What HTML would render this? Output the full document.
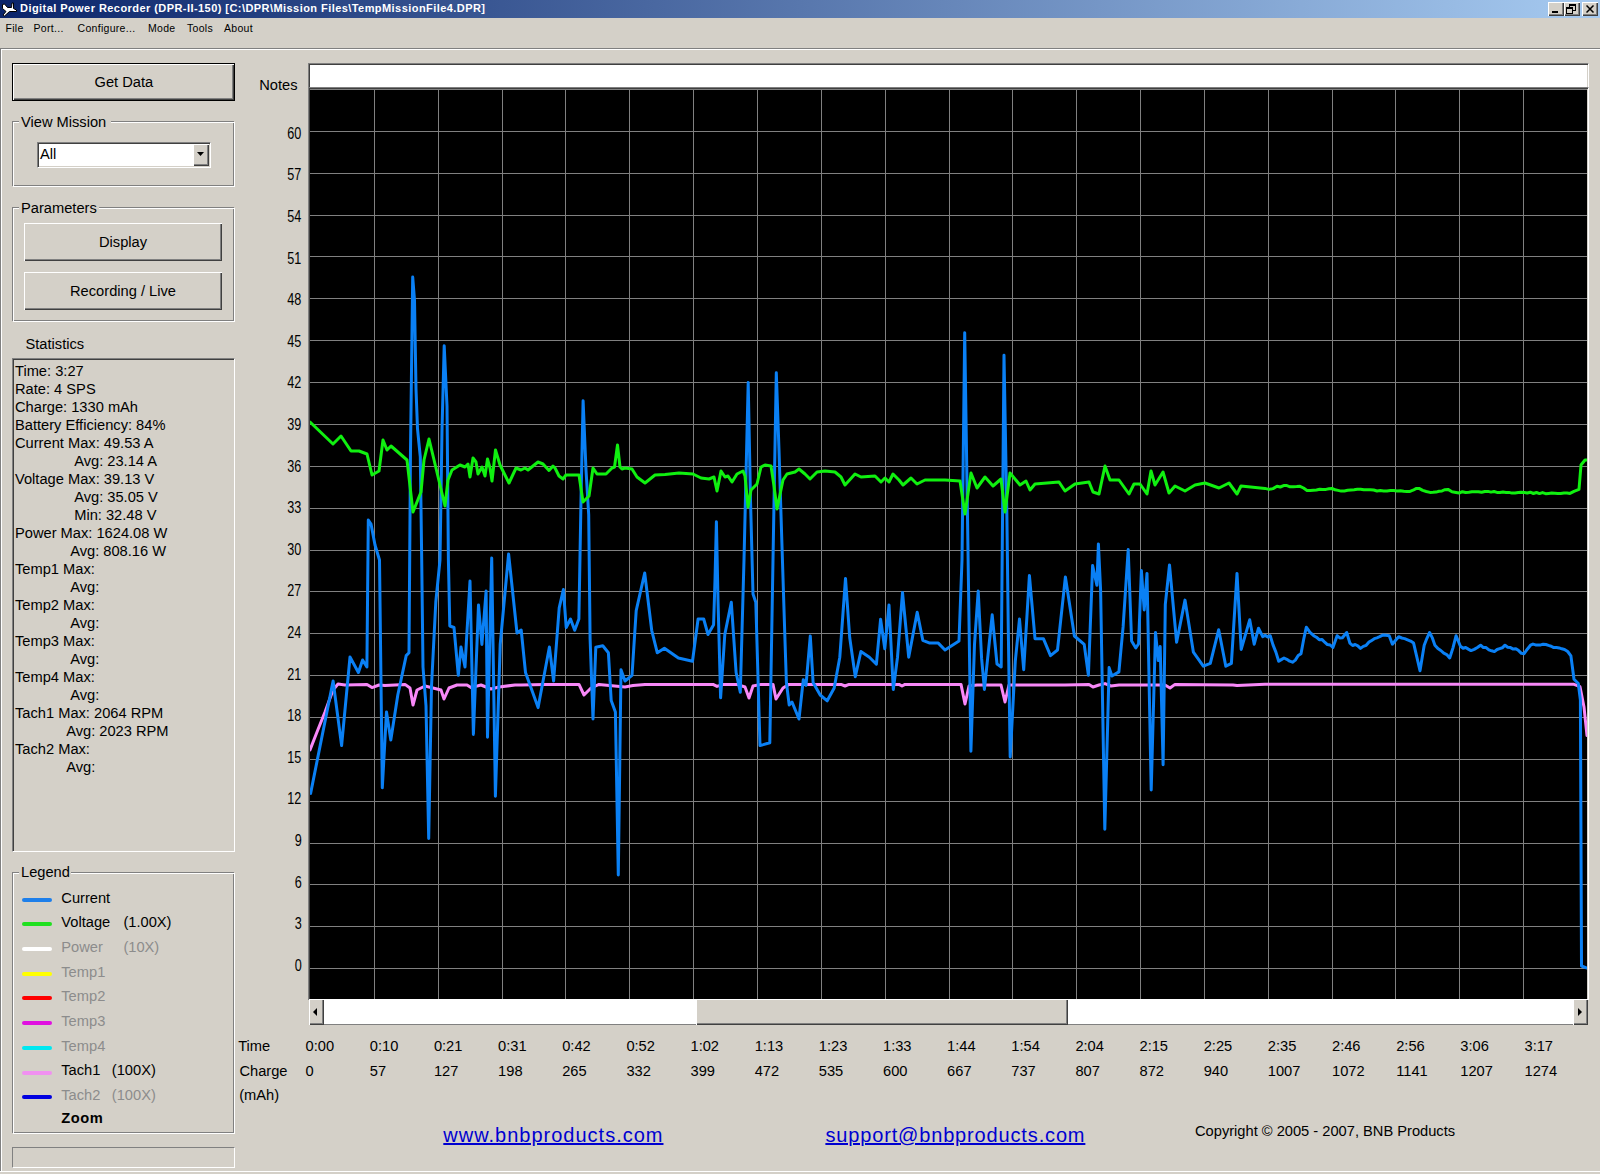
<!DOCTYPE html>
<html><head><meta charset="utf-8"><style>
html,body{margin:0;padding:0;}
body{width:1600px;height:1174px;position:relative;overflow:hidden;background:#D4D0C8;font-family:"Liberation Sans",sans-serif;color:#000;}
.t{position:absolute;white-space:nowrap;line-height:1;}
.tb{position:absolute;top:2px;width:16px;height:14px;background:#D4D0C8;box-sizing:border-box;box-shadow:inset 1px 1px #fff, inset -1px -1px #404040, inset -2px -2px #808080;}
</style></head><body>
<div style="position:absolute;left:0px;top:0px;width:1600px;height:18px;background:linear-gradient(to right,#0A246A,#A6CAF0);"></div>
<svg style="position:absolute;left:1px;top:1px" width="17" height="16" viewBox="0 0 17 16">
<path d="M1.5 3.5 L3.5 3 L6.5 6.5 L10.5 6.5 L11 2 L12.5 2 L12.5 7.5 L15.5 9 L15.5 10.5 L8.5 10.5 L3.5 15 L2 14 L5 10.5 L1.5 7.5 Z" fill="#fff" stroke="#000" stroke-width="1"/></svg>
<div class="t " style="left:20.0px;top:3.19px;font-size:11px;color:#fff;font-weight:bold;letter-spacing:0.44px;">Digital Power Recorder (DPR-II-150) [C:\DPR\Mission Files\TempMissionFile4.DPR]</div>
<div class="tb" style="left:1548px;"><div style="position:absolute;left:4px;top:9px;width:6px;height:2px;background:#000"></div></div>
<div class="tb" style="left:1564px;"><div style="position:absolute;left:5px;top:2px;width:5px;height:4px;border:1px solid #000;border-top-width:2px"></div><div style="position:absolute;left:2px;top:5px;width:5px;height:4px;border:1px solid #000;border-top-width:2px;background:#D4D0C8"></div></div>
<div class="tb" style="left:1582px;"><svg style="position:absolute;left:4px;top:3px" width="9" height="8"><path d="M0.5 0.5 L7.5 7.5 M7.5 0.5 L0.5 7.5" stroke="#000" stroke-width="1.5"/></svg></div>
<div class="t " style="left:5.5px;top:22.71px;font-size:10.5px;letter-spacing:0.3px;">File</div>
<div class="t " style="left:33.5px;top:22.71px;font-size:10.5px;letter-spacing:0.3px;">Port...</div>
<div class="t " style="left:77.5px;top:22.71px;font-size:10.5px;letter-spacing:0.3px;">Configure...</div>
<div class="t " style="left:148.0px;top:22.71px;font-size:10.5px;letter-spacing:0.3px;">Mode</div>
<div class="t " style="left:187.0px;top:22.71px;font-size:10.5px;letter-spacing:0.3px;">Tools</div>
<div class="t " style="left:224.0px;top:22.71px;font-size:10.5px;letter-spacing:0.3px;">About</div>
<div style="position:absolute;left:0px;top:48px;width:1600px;height:1px;background:#808080"></div>
<div style="position:absolute;left:0px;top:49px;width:1600px;height:1px;background:#fff"></div>
<div style="position:absolute;left:0px;top:48px;width:1px;height:1124px;background:#808080"></div>
<div style="position:absolute;left:1px;top:49px;width:1px;height:1122px;background:#fff"></div>
<div style="position:absolute;left:0px;top:1171px;width:1600px;height:1px;background:#fff"></div>
<div style="position:absolute;left:12px;top:63px;width:223px;height:38px;background:#D4D0C8;box-sizing:border-box;border:1px solid #000;box-shadow:inset 1px 1px #fff, inset -1px -1px #404040, inset -2px -2px #808080;"></div>
<div class="t " style="left:94.5px;top:74.58px;font-size:14.67px;">Get Data</div>
<div style="position:absolute;left:12px;top:121px;width:222px;height:65px;box-sizing:border-box;border:1px solid #808080;"></div><div style="position:absolute;left:13px;top:122px;width:222px;height:65px;box-sizing:border-box;border:1px solid #fff;"></div><div style="position:absolute;left:12px;top:121px;width:222px;height:65px;box-sizing:border-box;border-left:1px solid #808080;border-top:1px solid #808080;"></div>
<div style="position:absolute;left:19px;top:112px;width:92px;height:16px;background:#D4D0C8"></div>
<div class="t " style="left:21.0px;top:115.08px;font-size:14.67px;">View Mission</div>
<div style="position:absolute;left:37px;top:142px;width:174px;height:26px;box-sizing:border-box;background:#fff;border-left:1px solid #808080;border-top:1px solid #808080;border-right:1px solid #fff;border-bottom:1px solid #fff;box-shadow:inset 1px 1px #404040, inset -1px -1px #D4D0C8;"></div>
<div style="position:absolute;left:193px;top:144px;width:16px;height:22px;background:#D4D0C8;box-sizing:border-box;box-shadow:inset 1px 1px #fff, inset -1px -1px #404040, inset -2px -2px #808080;"></div>
<svg style="position:absolute;left:197px;top:152px" width="8" height="5"><path d="M0 0 H7 L3.5 4 Z" fill="#000"/></svg>
<div class="t " style="left:40.0px;top:147.28px;font-size:14.67px;">All</div>
<div style="position:absolute;left:12px;top:207px;width:222px;height:114px;box-sizing:border-box;border:1px solid #808080;"></div><div style="position:absolute;left:13px;top:208px;width:222px;height:114px;box-sizing:border-box;border:1px solid #fff;"></div><div style="position:absolute;left:12px;top:207px;width:222px;height:114px;box-sizing:border-box;border-left:1px solid #808080;border-top:1px solid #808080;"></div>
<div style="position:absolute;left:19px;top:198px;width:80px;height:16px;background:#D4D0C8"></div>
<div class="t " style="left:21.0px;top:200.58px;font-size:14.67px;">Parameters</div>
<div style="position:absolute;left:24px;top:223px;width:198px;height:38px;background:#D4D0C8;box-sizing:border-box;box-shadow:inset 1px 1px #fff, inset -1px -1px #404040, inset -2px -2px #808080;"></div>
<div class="t " style="left:0.0px;top:234.58px;font-size:14.67px;width:246px;text-align:center;">Display</div>
<div style="position:absolute;left:24px;top:272px;width:198px;height:38px;background:#D4D0C8;box-sizing:border-box;box-shadow:inset 1px 1px #fff, inset -1px -1px #404040, inset -2px -2px #808080;"></div>
<div class="t " style="left:0.0px;top:283.58px;font-size:14.67px;width:246px;text-align:center;">Recording / Live</div>
<div class="t " style="left:25.5px;top:336.88px;font-size:14.67px;">Statistics</div>
<div style="position:absolute;left:12px;top:358px;width:223px;height:494px;box-sizing:border-box;border-left:1px solid #808080;border-top:1px solid #808080;border-right:1px solid #fff;border-bottom:1px solid #fff;box-shadow:inset 1px 1px #404040;"></div>
<div class="t " style="left:15.0px;top:364.18px;font-size:14.67px;">Time: 3:27</div>
<div class="t " style="left:15.0px;top:382.18px;font-size:14.67px;">Rate: 4 SPS</div>
<div class="t " style="left:15.0px;top:400.18px;font-size:14.67px;">Charge: 1330 mAh</div>
<div class="t " style="left:15.0px;top:418.18px;font-size:14.67px;">Battery Efficiency: 84%</div>
<div class="t " style="left:15.0px;top:436.18px;font-size:14.67px;">Current Max: 49.53 A</div>
<div class="t " style="left:74.2px;top:454.18px;font-size:14.67px;">Avg: 23.14 A</div>
<div class="t " style="left:15.0px;top:472.18px;font-size:14.67px;">Voltage Max: 39.13 V</div>
<div class="t " style="left:74.2px;top:490.18px;font-size:14.67px;">Avg: 35.05 V</div>
<div class="t " style="left:74.2px;top:508.18px;font-size:14.67px;">Min: 32.48 V</div>
<div class="t " style="left:15.0px;top:526.18px;font-size:14.67px;">Power Max: 1624.08 W</div>
<div class="t " style="left:70.2px;top:544.18px;font-size:14.67px;">Avg: 808.16 W</div>
<div class="t " style="left:15.0px;top:562.18px;font-size:14.67px;">Temp1 Max:</div>
<div class="t " style="left:70.2px;top:580.18px;font-size:14.67px;">Avg:</div>
<div class="t " style="left:15.0px;top:598.18px;font-size:14.67px;">Temp2 Max:</div>
<div class="t " style="left:70.2px;top:616.18px;font-size:14.67px;">Avg:</div>
<div class="t " style="left:15.0px;top:634.18px;font-size:14.67px;">Temp3 Max:</div>
<div class="t " style="left:70.2px;top:652.18px;font-size:14.67px;">Avg:</div>
<div class="t " style="left:15.0px;top:670.18px;font-size:14.67px;">Temp4 Max:</div>
<div class="t " style="left:70.2px;top:688.18px;font-size:14.67px;">Avg:</div>
<div class="t " style="left:15.0px;top:706.18px;font-size:14.67px;">Tach1 Max: 2064 RPM</div>
<div class="t " style="left:66.2px;top:724.18px;font-size:14.67px;">Avg: 2023 RPM</div>
<div class="t " style="left:15.0px;top:742.18px;font-size:14.67px;">Tach2 Max:</div>
<div class="t " style="left:66.2px;top:760.18px;font-size:14.67px;">Avg:</div>
<div style="position:absolute;left:12px;top:872px;width:222px;height:261px;box-sizing:border-box;border:1px solid #808080;"></div><div style="position:absolute;left:13px;top:873px;width:222px;height:261px;box-sizing:border-box;border:1px solid #fff;"></div><div style="position:absolute;left:12px;top:872px;width:222px;height:261px;box-sizing:border-box;border-left:1px solid #808080;border-top:1px solid #808080;"></div>
<div style="position:absolute;left:19px;top:863px;width:52px;height:16px;background:#D4D0C8"></div>
<div class="t " style="left:21.0px;top:865.18px;font-size:14.67px;">Legend</div>
<div style="position:absolute;left:22px;top:898px;width:30px;height:4px;background:#1E7FEA;border-radius:2px;"></div>
<div class="t " style="left:61.3px;top:890.58px;font-size:14.67px;color:#000;">Current</div>
<div style="position:absolute;left:22px;top:922px;width:30px;height:4px;background:#20E020;border-radius:2px;"></div>
<div class="t " style="left:61.3px;top:915.28px;font-size:14.67px;color:#000;">Voltage</div>
<div class="t " style="left:123.4px;top:915.28px;font-size:14.67px;color:#000;">(1.00X)</div>
<div style="position:absolute;left:22px;top:947px;width:30px;height:4px;background:#FFFFFF;border-radius:2px;"></div>
<div class="t " style="left:61.3px;top:939.98px;font-size:14.67px;color:#8C8C8C;">Power</div>
<div class="t " style="left:123.4px;top:939.98px;font-size:14.67px;color:#8C8C8C;">(10X)</div>
<div style="position:absolute;left:22px;top:972px;width:30px;height:4px;background:#FFFF00;border-radius:2px;"></div>
<div class="t " style="left:61.3px;top:964.68px;font-size:14.67px;color:#8C8C8C;">Temp1</div>
<div style="position:absolute;left:22px;top:996px;width:30px;height:4px;background:#FF0000;border-radius:2px;"></div>
<div class="t " style="left:61.3px;top:989.38px;font-size:14.67px;color:#8C8C8C;">Temp2</div>
<div style="position:absolute;left:22px;top:1021px;width:30px;height:4px;background:#E010E0;border-radius:2px;"></div>
<div class="t " style="left:61.3px;top:1014.08px;font-size:14.67px;color:#8C8C8C;">Temp3</div>
<div style="position:absolute;left:22px;top:1046px;width:30px;height:4px;background:#00E8F0;border-radius:2px;"></div>
<div class="t " style="left:61.3px;top:1038.78px;font-size:14.67px;color:#8C8C8C;">Temp4</div>
<div style="position:absolute;left:22px;top:1071px;width:30px;height:4px;background:#F090F0;border-radius:2px;"></div>
<div class="t " style="left:61.3px;top:1063.48px;font-size:14.67px;color:#000;">Tach1</div>
<div class="t " style="left:111.8px;top:1063.48px;font-size:14.67px;color:#000;">(100X)</div>
<div style="position:absolute;left:22px;top:1095px;width:30px;height:4px;background:#0000E0;border-radius:2px;"></div>
<div class="t " style="left:61.3px;top:1088.18px;font-size:14.67px;color:#8C8C8C;">Tach2</div>
<div class="t " style="left:111.8px;top:1088.18px;font-size:14.67px;color:#8C8C8C;">(100X)</div>
<div class="t " style="left:61.3px;top:1110.58px;font-size:14.67px;font-weight:bold;letter-spacing:0.5px;">Zoom</div>
<div style="position:absolute;left:12px;top:1147px;width:223px;height:21px;box-sizing:border-box;border-left:1px solid #808080;border-top:1px solid #808080;border-right:1px solid #fff;border-bottom:1px solid #fff;"></div>
<div class="t " style="left:259.2px;top:77.78px;font-size:14.67px;">Notes</div>
<div style="position:absolute;left:308px;top:63px;width:1281px;height:26px;background:#fff;box-sizing:border-box;border-left:1px solid #808080;border-top:1px solid #808080;border-right:1px solid #fff;border-bottom:1px solid #D4D0C8;box-shadow:inset 1px 1px #404040, inset -1px -1px #D4D0C8;"></div>
<div style="position:absolute;left:308px;top:87px;width:1281px;height:913px;background:#000;box-sizing:border-box;border-left:1px solid #808080;border-top:1px solid #808080;border-right:1px solid #fff;box-shadow:inset 1px 1px #404040, inset -1px 0 #D4D0C8;"></div>
<svg style="position:absolute;left:0;top:0" width="1600" height="1174" viewBox="0 0 1600 1174"><g stroke="#808080" stroke-width="1" shape-rendering="crispEdges"><line x1="374.5" y1="89" x2="374.5" y2="999"/><line x1="438.5" y1="89" x2="438.5" y2="999"/><line x1="502.5" y1="89" x2="502.5" y2="999"/><line x1="565.5" y1="89" x2="565.5" y2="999"/><line x1="629.5" y1="89" x2="629.5" y2="999"/><line x1="693.5" y1="89" x2="693.5" y2="999"/><line x1="757.5" y1="89" x2="757.5" y2="999"/><line x1="821.5" y1="89" x2="821.5" y2="999"/><line x1="885.5" y1="89" x2="885.5" y2="999"/><line x1="949.5" y1="89" x2="949.5" y2="999"/><line x1="1012.5" y1="89" x2="1012.5" y2="999"/><line x1="1076.5" y1="89" x2="1076.5" y2="999"/><line x1="1140.5" y1="89" x2="1140.5" y2="999"/><line x1="1204.5" y1="89" x2="1204.5" y2="999"/><line x1="1268.5" y1="89" x2="1268.5" y2="999"/><line x1="1332.5" y1="89" x2="1332.5" y2="999"/><line x1="1395.5" y1="89" x2="1395.5" y2="999"/><line x1="1459.5" y1="89" x2="1459.5" y2="999"/><line x1="1523.5" y1="89" x2="1523.5" y2="999"/><line x1="310" y1="89.5" x2="1587" y2="89.5"/><line x1="310" y1="131.5" x2="1587" y2="131.5"/><line x1="310" y1="173.5" x2="1587" y2="173.5"/><line x1="310" y1="215.5" x2="1587" y2="215.5"/><line x1="310" y1="256.5" x2="1587" y2="256.5"/><line x1="310" y1="298.5" x2="1587" y2="298.5"/><line x1="310" y1="340.5" x2="1587" y2="340.5"/><line x1="310" y1="382.5" x2="1587" y2="382.5"/><line x1="310" y1="424.5" x2="1587" y2="424.5"/><line x1="310" y1="466.5" x2="1587" y2="466.5"/><line x1="310" y1="508.5" x2="1587" y2="508.5"/><line x1="310" y1="550.5" x2="1587" y2="550.5"/><line x1="310" y1="591.5" x2="1587" y2="591.5"/><line x1="310" y1="633.5" x2="1587" y2="633.5"/><line x1="310" y1="675.5" x2="1587" y2="675.5"/><line x1="310" y1="717.5" x2="1587" y2="717.5"/><line x1="310" y1="759.5" x2="1587" y2="759.5"/><line x1="310" y1="801.5" x2="1587" y2="801.5"/><line x1="310" y1="843.5" x2="1587" y2="843.5"/><line x1="310" y1="884.5" x2="1587" y2="884.5"/><line x1="310" y1="926.5" x2="1587" y2="926.5"/><line x1="310" y1="968.5" x2="1587" y2="968.5"/></g><g clip-path="url(#clip)"><clipPath id="clip"><rect x="310" y="89" width="1277" height="910"/></clipPath><polyline fill="none" stroke="#F888F8" stroke-width="3" stroke-linejoin="round" stroke-linecap="round" points="310.0,750.0 317.0,732.0 325.0,712.0 333.0,690.0 338.0,684.0 345.0,685.0 367.0,684.4 372.0,687.6 379.0,685.0 385.0,685.6 405.0,684.4 410.0,688.0 413.0,705.0 417.0,690.0 425.0,686.0 433.0,688.0 441.0,690.0 444.0,699.0 449.0,688.0 457.0,685.0 467.0,685.0 471.0,687.6 481.0,685.0 491.0,689.0 499.0,687.0 515.0,685.0 521.0,685.0 545.0,684.4 579.0,684.4 584.0,695.0 591.0,688.0 599.0,684.4 625.0,687.0 633.0,685.6 645.0,684.4 713.0,684.4 717.0,686.4 723.0,684.4 737.0,684.4 745.0,687.0 749.0,698.0 753.0,686.0 761.0,684.4 773.0,684.4 776.0,699.0 783.0,688.0 789.0,684.4 841.0,684.4 845.0,686.0 849.0,684.4 899.0,684.4 902.0,686.0 905.0,684.4 945.0,684.4 961.0,684.4 965.0,704.0 969.0,686.0 977.0,685.0 1001.0,685.0 1005.0,702.0 1009.0,685.0 1025.0,685.0 1065.0,685.0 1089.0,684.4 1093.0,687.0 1099.0,685.0 1105.0,683.6 1111.0,686.0 1119.0,685.0 1165.0,685.0 1170.0,688.0 1175.0,684.4 1233.0,685.0 1237.0,685.6 1265.0,684.3 1574.0,684.3 1580.0,686.7 1584.0,707.0 1587.0,735.5"/><polyline fill="none" stroke="#0A80F5" stroke-width="3" stroke-linejoin="round" stroke-linecap="round" points="310.6,793.4 333.1,681.0 341.6,745.6 350.0,657.0 358.4,672.5 362.6,660.0 366.9,667.0 368.3,520.0 371.0,524.0 375.0,545.0 379.5,560.0 382.3,787.8 386.5,711.9 390.8,740.0 397.8,695.0 406.2,655.6 409.0,652.8 410.5,450.0 412.7,277.0 414.5,300.0 416.0,389.0 417.5,428.7 418.9,442.8 420.3,456.9 421.7,560.0 423.0,667.0 426.0,706.0 428.7,838.4 431.5,686.5 435.8,602.0 440.0,560.0 442.0,430.0 444.2,345.8 447.0,406.0 448.4,560.0 449.8,626.0 454.0,627.5 458.3,675.3 461.0,647.0 465.0,667.0 466.4,641.6 470.0,581.0 473.4,734.4 478.5,605.0 481.9,644.4 486.1,591.0 487.5,737.2 491.7,558.0 495.4,796.2 500.2,644.4 508.6,554.0 517.0,633.0 521.2,630.0 525.5,672.5 538.1,707.6 549.4,647.0 553.6,681.0 559.2,607.8 563.4,589.5 566.2,627.5 570.5,619.0 574.7,630.3 578.9,619.0 581.0,500.0 583.1,400.8 586.0,470.0 588.7,514.7 590.1,638.7 593.0,719.0 595.8,647.2 602.8,645.8 608.4,652.8 611.2,700.6 615.4,711.9 618.3,875.0 621.0,669.7 625.0,681.0 632.0,675.3 636.2,610.6 644.7,573.0 651.7,630.3 657.3,652.8 664.4,648.2 678.4,658.0 692.5,661.2 698.1,619.0 703.7,619.0 708.0,634.5 713.6,624.7 715.0,580.0 716.4,521.7 718.0,600.0 720.6,697.8 724.8,634.5 731.3,602.2 736.1,672.5 740.3,692.2 744.0,560.0 748.2,382.5 750.5,500.0 753.0,594.0 755.8,602.2 760.0,745.6 769.8,742.8 773.0,560.0 776.3,372.7 779.0,450.0 781.0,514.7 785.0,641.0 786.4,682.5 789.2,705.0 792.0,702.0 799.0,719.0 803.3,679.7 806.0,685.3 810.3,636.0 813.1,682.5 820.2,695.0 827.2,700.8 834.2,688.0 839.8,657.2 845.5,578.4 849.7,637.5 855.3,676.8 860.9,651.5 869.4,657.2 876.4,664.2 880.6,619.2 884.8,648.7 889.0,605.0 893.3,689.5 897.5,657.2 902.5,592.5 908.7,657.2 917.2,612.2 922.8,640.3 929.8,643.1 938.3,643.1 945.0,650.0 959.0,641.0 962.0,560.0 964.7,332.7 967.5,516.8 970.9,751.2 974.5,644.4 978.2,591.0 981.6,658.4 984.4,689.4 992.2,614.8 997.0,664.0 1001.2,666.9 1004.0,355.2 1006.9,516.8 1008.3,630.3 1010.2,756.9 1015.3,661.2 1019.5,619.0 1023.7,669.7 1029.4,575.5 1035.0,638.7 1043.4,638.7 1050.5,655.6 1057.5,650.0 1065.4,576.9 1074.4,636.0 1084.2,644.4 1088.4,675.3 1092.6,565.6 1096.9,585.3 1098.4,543.9 1100.6,590.3 1104.8,829.3 1107.7,722.5 1109.1,667.6 1111.9,676.0 1118.9,671.9 1123.1,626.9 1128.2,549.5 1131.6,641.0 1135.8,648.0 1138.6,643.7 1141.4,570.6 1144.2,610.0 1147.0,573.4 1151.2,790.0 1155.5,632.5 1158.3,660.6 1160.2,646.5 1163.1,764.7 1165.3,604.4 1169.5,565.0 1176.6,642.3 1185.0,600.1 1193.4,652.2 1203.3,666.2 1210.3,663.4 1218.7,629.7 1225.8,666.2 1231.4,663.4 1237.0,573.4 1241.2,649.4 1249.7,619.8 1254.2,644.2 1258.5,628.2 1262.7,636.7 1265.2,635.4 1267.7,636.9 1270.2,635.7 1273.0,644.9 1275.9,652.1 1278.7,661.2 1281.3,659.6 1284.0,658.0 1286.8,659.3 1289.7,661.2 1292.5,662.2 1295.3,660.1 1298.2,655.5 1301.0,653.7 1303.7,639.2 1306.3,627.2 1310.0,632.3 1313.7,635.7 1316.4,637.2 1319.2,639.7 1321.9,639.4 1324.7,642.2 1327.4,644.6 1330.2,645.0 1332.9,647.4 1337.1,635.7 1339.8,637.9 1342.4,637.8 1346.7,632.5 1349.9,643.1 1352.6,645.5 1355.2,644.5 1357.8,645.8 1360.5,648.4 1363.3,646.4 1366.2,645.3 1369.0,642.1 1371.7,640.4 1374.3,638.7 1376.9,637.8 1379.6,636.7 1382.8,635.1 1386.0,635.3 1389.2,635.7 1392.4,644.2 1395.6,640.3 1398.7,636.7 1401.7,638.0 1404.7,638.6 1407.6,639.8 1410.6,641.1 1413.6,643.1 1416.8,656.8 1420.0,670.7 1424.2,645.2 1426.9,638.3 1429.6,632.5 1432.2,637.6 1434.9,645.2 1437.9,648.6 1440.8,650.5 1443.8,653.2 1446.7,654.6 1449.7,658.0 1452.9,648.1 1456.1,635.7 1460.4,646.3 1463.1,648.3 1465.7,647.5 1468.3,649.1 1471.0,650.6 1474.2,649.4 1477.4,647.5 1480.6,645.2 1483.4,647.6 1486.1,647.6 1488.9,649.9 1491.6,650.8 1494.4,651.6 1497.1,649.5 1499.7,648.6 1502.3,647.8 1505.0,645.2 1507.7,647.3 1510.5,647.6 1513.2,649.1 1515.9,648.8 1518.6,650.6 1521.4,653.3 1524.1,653.7 1527.3,649.2 1530.5,645.2 1533.0,644.1 1535.6,644.9 1538.1,645.1 1540.7,644.9 1543.2,644.2 1545.9,644.5 1548.5,645.4 1551.2,646.2 1553.8,647.6 1556.5,647.6 1559.2,647.9 1561.8,648.8 1564.5,649.5 1567.7,651.5 1570.9,655.9 1574.0,679.2 1578.3,683.5 1580.4,700.0 1581.5,966.0 1587.0,968.0"/><polyline fill="none" stroke="#10F010" stroke-width="3" stroke-linejoin="round" stroke-linecap="round" points="310.0,422.0 333.0,444.0 341.0,436.0 351.0,451.0 359.0,451.0 367.0,454.0 372.0,475.0 379.0,471.0 383.0,440.0 387.0,450.0 391.0,446.0 407.0,460.0 413.0,512.0 421.0,492.0 424.0,460.0 429.0,439.0 435.0,464.0 445.0,506.0 448.0,480.0 452.0,470.0 460.0,465.0 465.0,467.0 468.0,464.0 470.0,477.0 473.0,458.0 476.0,462.0 478.0,474.0 482.0,467.0 485.0,476.0 487.5,459.0 490.0,468.0 492.0,481.0 495.5,450.0 500.0,465.0 509.0,483.0 516.0,468.0 521.0,470.0 525.0,468.0 528.0,470.0 538.0,462.0 543.0,464.0 549.0,470.5 553.0,466.0 555.0,468.0 559.0,476.0 563.0,479.0 566.0,475.0 579.0,475.0 583.0,502.0 589.0,496.0 593.0,468.0 597.0,474.0 606.0,474.0 612.0,468.0 614.5,467.0 617.5,445.0 620.0,467.0 622.0,469.0 625.0,468.0 632.0,469.0 637.0,477.0 645.0,483.0 655.0,475.0 665.0,474.4 679.0,473.0 693.0,474.0 701.0,478.0 709.0,479.0 714.0,477.0 717.0,491.0 721.0,471.0 725.0,477.0 728.0,476.0 732.0,482.0 737.0,474.0 743.0,471.0 745.0,476.0 748.0,507.0 751.0,490.0 757.0,484.0 761.0,467.0 765.0,465.0 771.0,466.0 774.0,486.0 777.0,509.0 783.0,480.0 787.0,474.0 795.0,472.0 799.0,469.0 805.0,474.0 810.0,479.0 817.0,472.0 825.0,471.0 835.0,472.0 841.0,477.0 845.0,485.0 855.0,474.0 861.0,477.0 875.0,476.0 881.0,482.0 885.0,478.0 889.0,482.0 893.0,474.0 899.0,480.0 903.0,485.0 911.0,478.0 917.0,484.0 925.0,480.0 945.0,480.0 960.0,481.0 965.0,514.0 971.0,473.0 977.0,488.0 985.0,477.0 993.0,486.0 1001.0,479.0 1005.0,512.0 1010.0,473.0 1020.0,485.0 1026.0,481.0 1030.0,490.0 1035.0,484.0 1059.0,482.0 1065.0,491.0 1075.0,484.0 1089.0,482.0 1093.0,492.0 1099.0,494.0 1105.0,466.0 1110.0,480.0 1119.0,480.0 1129.0,494.0 1134.0,484.0 1140.0,484.0 1147.0,494.0 1151.0,471.0 1155.0,485.0 1163.0,472.0 1169.0,493.0 1175.0,486.0 1185.0,491.0 1195.0,485.0 1205.0,483.0 1219.0,488.0 1229.0,483.0 1237.0,494.0 1241.0,486.0 1265.0,488.4 1269.0,489.4 1273.0,488.6 1277.0,486.3 1280.3,487.0 1283.6,485.6 1286.9,485.6 1290.1,486.8 1293.4,486.7 1296.7,486.6 1300.0,486.3 1303.5,488.0 1307.0,490.4 1310.2,490.4 1313.3,490.2 1316.5,490.0 1319.7,489.2 1322.8,489.5 1326.0,489.4 1329.0,488.7 1332.0,488.4 1335.0,489.8 1338.0,490.4 1341.2,491.1 1344.4,491.0 1347.7,490.3 1350.9,490.0 1354.1,489.7 1357.3,489.3 1360.6,489.2 1363.8,489.8 1367.0,489.8 1370.3,489.7 1373.7,490.0 1377.0,491.0 1380.3,490.6 1383.7,490.9 1387.0,491.0 1390.3,490.6 1393.7,490.4 1397.0,490.9 1400.3,490.7 1403.7,491.3 1407.0,491.4 1410.0,491.4 1413.0,490.2 1416.0,488.6 1419.0,488.4 1422.7,490.4 1426.3,491.5 1430.0,492.4 1433.0,492.3 1436.0,492.1 1439.0,491.3 1442.0,490.9 1445.0,489.7 1448.0,489.4 1452.0,491.7 1456.0,492.4 1459.2,493.0 1462.4,491.7 1465.6,492.5 1468.8,492.3 1472.0,491.8 1475.2,491.8 1478.4,491.7 1481.6,492.3 1484.8,491.5 1488.0,491.4 1491.0,492.1 1494.0,491.5 1497.0,492.4 1500.0,492.6 1503.0,492.1 1506.0,492.4 1509.0,492.4 1512.0,493.1 1515.1,492.9 1518.2,492.5 1521.2,492.2 1524.2,492.4 1527.3,493.0 1530.3,492.2 1533.4,493.5 1536.5,492.5 1539.5,493.6 1542.5,492.6 1545.6,493.7 1548.7,493.4 1551.7,493.1 1554.8,493.2 1557.8,493.4 1560.8,493.4 1563.9,493.0 1567.0,492.9 1570.0,493.4 1574.0,491.4 1579.0,489.4 1581.0,465.0 1585.0,460.0 1588.0,460.0"/></g></svg>
<div class="t" style="right:1298.7px;top:125.89px;font-size:15.6px;transform:scaleX(0.81);transform-origin:right;">60</div>
<div class="t" style="right:1298.7px;top:167.49px;font-size:15.6px;transform:scaleX(0.81);transform-origin:right;">57</div>
<div class="t" style="right:1298.7px;top:209.09px;font-size:15.6px;transform:scaleX(0.81);transform-origin:right;">54</div>
<div class="t" style="right:1298.7px;top:250.69px;font-size:15.6px;transform:scaleX(0.81);transform-origin:right;">51</div>
<div class="t" style="right:1298.7px;top:292.29px;font-size:15.6px;transform:scaleX(0.81);transform-origin:right;">48</div>
<div class="t" style="right:1298.7px;top:333.89px;font-size:15.6px;transform:scaleX(0.81);transform-origin:right;">45</div>
<div class="t" style="right:1298.7px;top:375.49px;font-size:15.6px;transform:scaleX(0.81);transform-origin:right;">42</div>
<div class="t" style="right:1298.7px;top:417.09px;font-size:15.6px;transform:scaleX(0.81);transform-origin:right;">39</div>
<div class="t" style="right:1298.7px;top:458.69px;font-size:15.6px;transform:scaleX(0.81);transform-origin:right;">36</div>
<div class="t" style="right:1298.7px;top:500.29px;font-size:15.6px;transform:scaleX(0.81);transform-origin:right;">33</div>
<div class="t" style="right:1298.7px;top:541.89px;font-size:15.6px;transform:scaleX(0.81);transform-origin:right;">30</div>
<div class="t" style="right:1298.7px;top:583.49px;font-size:15.6px;transform:scaleX(0.81);transform-origin:right;">27</div>
<div class="t" style="right:1298.7px;top:625.09px;font-size:15.6px;transform:scaleX(0.81);transform-origin:right;">24</div>
<div class="t" style="right:1298.7px;top:666.69px;font-size:15.6px;transform:scaleX(0.81);transform-origin:right;">21</div>
<div class="t" style="right:1298.7px;top:708.29px;font-size:15.6px;transform:scaleX(0.81);transform-origin:right;">18</div>
<div class="t" style="right:1298.7px;top:749.89px;font-size:15.6px;transform:scaleX(0.81);transform-origin:right;">15</div>
<div class="t" style="right:1298.7px;top:791.49px;font-size:15.6px;transform:scaleX(0.81);transform-origin:right;">12</div>
<div class="t" style="right:1298.7px;top:833.09px;font-size:15.6px;transform:scaleX(0.81);transform-origin:right;">9</div>
<div class="t" style="right:1298.7px;top:874.69px;font-size:15.6px;transform:scaleX(0.81);transform-origin:right;">6</div>
<div class="t" style="right:1298.7px;top:916.29px;font-size:15.6px;transform:scaleX(0.81);transform-origin:right;">3</div>
<div class="t" style="right:1298.7px;top:957.89px;font-size:15.6px;transform:scaleX(0.81);transform-origin:right;">0</div>
<div style="position:absolute;left:309px;top:999px;width:1279px;height:26px;background:#fff;box-sizing:border-box;border-bottom:1px solid #808080;"></div>
<div style="position:absolute;left:309px;top:999px;width:15px;height:26px;background:#D4D0C8;box-sizing:border-box;box-shadow:inset 1px 1px #fff, inset -1px -1px #404040, inset -2px -2px #808080;"></div>
<div style="position:absolute;left:1573px;top:999px;width:15px;height:26px;background:#D4D0C8;box-sizing:border-box;box-shadow:inset 1px 1px #fff, inset -1px -1px #404040, inset -2px -2px #808080;"></div>
<div style="position:absolute;left:696px;top:999px;width:372px;height:26px;background:#D4D0C8;box-sizing:border-box;box-shadow:inset 1px 1px #fff, inset -1px -1px #404040, inset -2px -2px #808080;"></div>
<svg style="position:absolute;left:313px;top:1008px" width="6" height="8"><path d="M4 0 V8 L0 4 Z" fill="#000"/></svg>
<svg style="position:absolute;left:1578px;top:1008px" width="6" height="8"><path d="M0 0 V8 L4 4 Z" fill="#000"/></svg>
<div class="t " style="left:238.2px;top:1038.78px;font-size:14.67px;">Time</div>
<div class="t " style="left:239.4px;top:1064.38px;font-size:14.67px;">Charge</div>
<div class="t " style="left:239.2px;top:1087.78px;font-size:14.67px;">(mAh)</div>
<div class="t " style="left:305.6px;top:1038.78px;font-size:14.67px;">0:00</div>
<div class="t " style="left:305.6px;top:1064.38px;font-size:14.67px;">0</div>
<div class="t " style="left:369.8px;top:1038.78px;font-size:14.67px;">0:10</div>
<div class="t " style="left:369.8px;top:1064.38px;font-size:14.67px;">57</div>
<div class="t " style="left:433.9px;top:1038.78px;font-size:14.67px;">0:21</div>
<div class="t " style="left:433.9px;top:1064.38px;font-size:14.67px;">127</div>
<div class="t " style="left:498.1px;top:1038.78px;font-size:14.67px;">0:31</div>
<div class="t " style="left:498.1px;top:1064.38px;font-size:14.67px;">198</div>
<div class="t " style="left:562.2px;top:1038.78px;font-size:14.67px;">0:42</div>
<div class="t " style="left:562.2px;top:1064.38px;font-size:14.67px;">265</div>
<div class="t " style="left:626.4px;top:1038.78px;font-size:14.67px;">0:52</div>
<div class="t " style="left:626.4px;top:1064.38px;font-size:14.67px;">332</div>
<div class="t " style="left:690.5px;top:1038.78px;font-size:14.67px;">1:02</div>
<div class="t " style="left:690.5px;top:1064.38px;font-size:14.67px;">399</div>
<div class="t " style="left:754.7px;top:1038.78px;font-size:14.67px;">1:13</div>
<div class="t " style="left:754.7px;top:1064.38px;font-size:14.67px;">472</div>
<div class="t " style="left:818.8px;top:1038.78px;font-size:14.67px;">1:23</div>
<div class="t " style="left:818.8px;top:1064.38px;font-size:14.67px;">535</div>
<div class="t " style="left:883.0px;top:1038.78px;font-size:14.67px;">1:33</div>
<div class="t " style="left:883.0px;top:1064.38px;font-size:14.67px;">600</div>
<div class="t " style="left:947.1px;top:1038.78px;font-size:14.67px;">1:44</div>
<div class="t " style="left:947.1px;top:1064.38px;font-size:14.67px;">667</div>
<div class="t " style="left:1011.3px;top:1038.78px;font-size:14.67px;">1:54</div>
<div class="t " style="left:1011.3px;top:1064.38px;font-size:14.67px;">737</div>
<div class="t " style="left:1075.4px;top:1038.78px;font-size:14.67px;">2:04</div>
<div class="t " style="left:1075.4px;top:1064.38px;font-size:14.67px;">807</div>
<div class="t " style="left:1139.5px;top:1038.78px;font-size:14.67px;">2:15</div>
<div class="t " style="left:1139.5px;top:1064.38px;font-size:14.67px;">872</div>
<div class="t " style="left:1203.7px;top:1038.78px;font-size:14.67px;">2:25</div>
<div class="t " style="left:1203.7px;top:1064.38px;font-size:14.67px;">940</div>
<div class="t " style="left:1267.8px;top:1038.78px;font-size:14.67px;">2:35</div>
<div class="t " style="left:1267.8px;top:1064.38px;font-size:14.67px;">1007</div>
<div class="t " style="left:1332.0px;top:1038.78px;font-size:14.67px;">2:46</div>
<div class="t " style="left:1332.0px;top:1064.38px;font-size:14.67px;">1072</div>
<div class="t " style="left:1396.2px;top:1038.78px;font-size:14.67px;">2:56</div>
<div class="t " style="left:1396.2px;top:1064.38px;font-size:14.67px;">1141</div>
<div class="t " style="left:1460.3px;top:1038.78px;font-size:14.67px;">3:06</div>
<div class="t " style="left:1460.3px;top:1064.38px;font-size:14.67px;">1207</div>
<div class="t " style="left:1524.5px;top:1038.78px;font-size:14.67px;">3:17</div>
<div class="t " style="left:1524.5px;top:1064.38px;font-size:14.67px;">1274</div>
<div class="t " style="left:443.3px;top:1125.07px;font-size:20px;color:#0000D0;letter-spacing:1px;text-decoration:underline;">www.bnbproducts.com</div>
<div class="t " style="left:825.4px;top:1125.07px;font-size:20px;color:#0000D0;letter-spacing:0.85px;text-decoration:underline;">support@bnbproducts.com</div>
<div class="t " style="left:1195.0px;top:1124.28px;font-size:14.67px;">Copyright © 2005 - 2007, BNB Products</div>
</body></html>
